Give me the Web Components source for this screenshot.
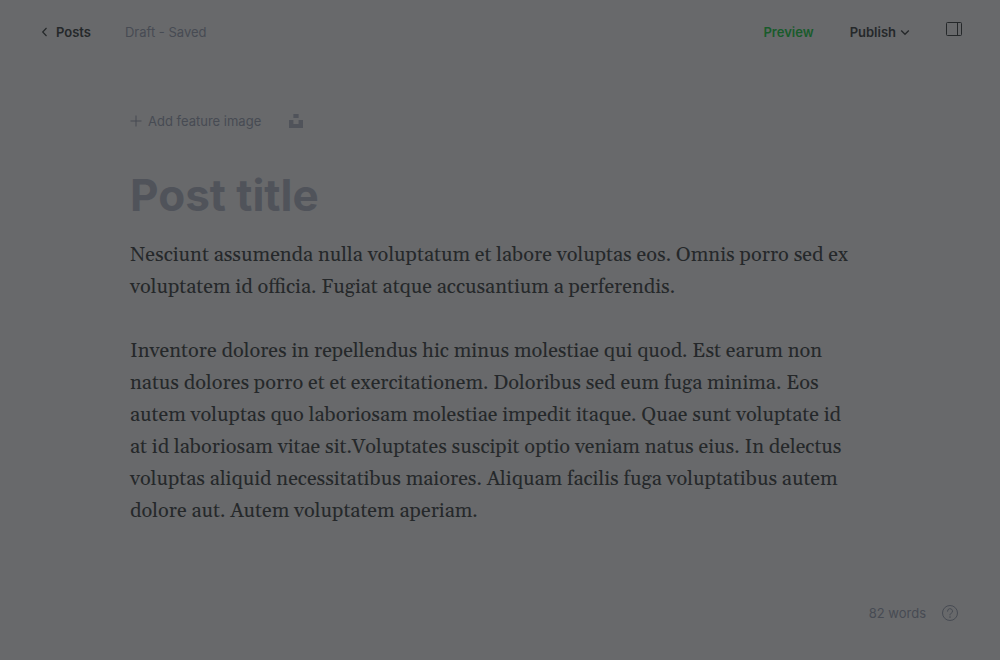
<!DOCTYPE html>
<html lang="en">
<head>
<meta charset="utf-8">
<meta name="viewport" content="width=device-width, initial-scale=1">
<title>Post editor</title>
<style>
  :root {
    --page: #68696b;
    --ink: #25282a;
    --muted: #474b53;
    --faint: #50535a;
    --green: #195b2b;
  }
  html { background: var(--page); }
  body { margin: 0; font: 13px/20px Inter, sans-serif; color: var(--ink); }
</style>
</head>
<body>
<post-editor>
  <editor-header slot="header"></editor-header>
  <feature-image slot="body"></feature-image>
  <post-title slot="body"></post-title>
  <post-body slot="body">
    <p>Nesciunt assumenda nulla voluptatum et labore voluptas eos. Omnis porro sed ex voluptatem id officia. Fugiat atque accusantium a perferendis.</p>
    <p>Inventore dolores in repellendus hic minus molestiae qui quod. Est earum non natus dolores porro et et exercitationem. Doloribus sed eum fuga minima. Eos autem voluptas quo laboriosam molestiae impedit itaque. Quae sunt voluptate id at id laboriosam vitae sit.Voluptates suscipit optio veniam natus eius. In delectus voluptas aliquid necessitatibus maiores. Aliquam facilis fuga voluptatibus autem dolore aut. Autem voluptatem aperiam.</p>
  </post-body>
  <editor-status slot="footer">82 words</editor-status>
</post-editor>
<script>
const reset = `
  * { box-sizing: border-box; }
  button, input { font: inherit; color: inherit; background: none; border: 0; padding: 0; margin: 0; }
  a { color: inherit; text-decoration: none; }
  svg { display: block; flex: none; }
`;
function define(name, css, html) {
  customElements.define(name, class extends HTMLElement {
    constructor() {
      super();
      this.attachShadow({ mode: 'open' }).innerHTML = `<style>${reset}${css}</style>${html}`;
    }
  });
}

define('post-editor', `
  :host { display: flex; flex-direction: column; min-height: 100vh; }
  main { flex: 1; width: 100%; max-width: 788px; margin: 0 auto; padding: 47px 24px 24px; }
`, `<slot name="header"></slot><main><slot name="body"></slot></main><slot name="footer"></slot>`);

define('editor-header', `
  :host { display: block; }
  header { display: flex; align-items: center; gap: 34px; padding: 16px 38px 16px 40px; height: 64px; }
  .back { display: flex; align-items: center; gap: 8px; font-weight: 600; }
  .state { color: var(--muted); }
  .actions { margin-left: auto; display: flex; align-items: center; gap: 36px; }
  button { display: flex; align-items: center; gap: 4px; font-weight: 600; }
  .preview { color: var(--green); }
  .panel { align-self: flex-start; }
`, `<header>
  <a class="back" href="#posts"><svg width="8" height="10" viewBox="0 0 8 10" fill="none" stroke="currentColor" stroke-width="1.2"><path d="M6.500 1 2.700 5l3.800 4"/></svg>Posts</a>
  <span class="state">Draft - Saved</span>
  <div class="actions">
    <button class="preview" type="button">Preview</button>
    <button type="button">Publish<svg width="10" height="10" viewBox="0 0 10 10" fill="none" stroke="currentColor" stroke-width="1.3"><path d="M1.200 3.500 5 7.300 8.800 3.500"/></svg></button>
    <button class="panel" type="button" aria-label="Settings"><svg width="16" height="14" viewBox="0 0 16 14" fill="none" stroke="currentColor"><rect x=".5" y=".5" width="15" height="13" rx="1"/><path d="M11.500 .5v13"/></svg></button>
  </div>
</header>`);

define('feature-image', `
  :host { display: flex; align-items: center; gap: 28px; color: var(--muted); }
  button { display: flex; align-items: center; gap: 6px; }
  .library { color: var(--faint); }
`, `<button type="button"><svg width="12" height="12" viewBox="0 0 12 12" fill="none" stroke="currentColor"><path d="M6 .5v11M.5 6h11"/></svg>Add feature image</button>
<button class="library" type="button" aria-label="Unsplash"><svg width="14" height="14" viewBox="0 0 14 14" fill="currentColor"><path d="M4.400 0h5.200v3.900H4.400zM0 6.100h4.400V10h5.200V6.100H14V14H0z"/></svg></button>`);

define('post-title', `
  :host { display: block; margin: 36px 0 16px; }
  input { display: block; width: 100%; height: 56px; font-size: 44px; font-weight: 700; outline: 0; }
  input::placeholder { color: var(--faint); opacity: 1; }
`, `<input type="text" placeholder="Post title" aria-label="Post title">`);

define('post-body', `
  :host { display: block; padding-right: 10px; font: 20px/32px Georgia, Gelasio, "Liberation Serif", serif; }
  ::slotted(p) { margin: 0 0 32px; }
`, `<slot></slot>`);

define('editor-status', `
  :host { display: flex; align-items: center; justify-content: flex-end; gap: 16px; padding: 0 42px 37px; color: var(--muted); }
`, `<span><slot></slot></span><a href="#help" aria-label="Help"><svg width="16" height="16" viewBox="0 0 16 16" fill="none" stroke="currentColor"><circle cx="8" cy="8" r="7.500"/><path d="M5.500 6.200a2.500 2.500 0 1 1 3.600 2.200C8.300 8.800 8 9.100 8 10" stroke-linecap="round"/><circle cx="8" cy="12" r=".5" fill="currentColor" stroke-width=".4"/></svg></a>`);
</script>
</body>
</html>
